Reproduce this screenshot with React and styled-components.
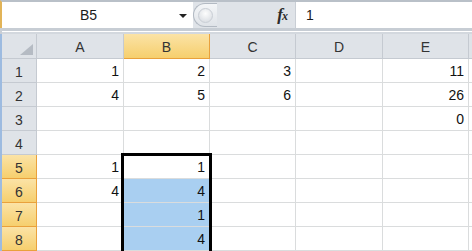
import React from "react";
import styled, { createGlobalStyle } from "styled-components";

const GlobalStyle = createGlobalStyle`
  html, body {
    margin: 0;
    padding: 0;
    background: #fff;
    overflow: hidden;
  }
  body {
    font-family: "Liberation Sans", Arial, sans-serif;
    font-size: 14px;
    color: #1a1a1a;
  }
`;

const Frame = styled.div`
  width: 472px;
  height: 251px;
  display: flex;
  flex-direction: column;
  overflow: hidden;
`;

const FormulaBar = styled.div`
  display: flex;
  height: 26px;
  border-top: 2px solid #b9c0c8;
  border-left: 2px solid #e2b458;
  background: #dfe3e8;
`;

const NameBox = styled.div`
  width: 191px;
  display: flex;
  align-items: center;
  background: #fff;
`;

const NameText = styled.div`
  flex: 1;
  text-align: center;
  padding-left: 2px;
`;

const Arrow = styled.div`
  width: 20px;
  display: flex;
  justify-content: center;

  &::before {
    content: "";
    border-left: 4px solid transparent;
    border-right: 4px solid transparent;
    border-top: 4px solid #222;
    margin-top: 2px;
  }
`;

const Handle = styled.div`
  width: 24px;
  margin: 1px 0;
  border: 1px solid #b3bac3;
  border-right: none;
  border-radius: 13px 0 0 13px;
  background: linear-gradient(to bottom, #f4f6f8, #dfe3e8);
  display: flex;
  align-items: center;
  padding-left: 4px;
  box-sizing: border-box;

  &::before {
    content: "";
    width: 13px;
    height: 13px;
    border-radius: 50%;
    background: radial-gradient(circle at 50% 35%, #fdfdfd, #d3d8de);
    border: 1px solid #c9ced5;
  }
`;

const FxArea = styled.div`
  width: 79px;
  display: flex;
  align-items: center;
  justify-content: flex-end;
  padding-right: 8px;
  box-sizing: border-box;
  border-right: 1px solid #c9ced5;
`;

const Fx = styled.span`
  font-family: "Liberation Serif", "Times New Roman", serif;
  font-style: italic;
  font-weight: bold;
  font-size: 17px;
  color: #2b2b2b;
  letter-spacing: -1px;

  & sub {
    font-size: 12px;
    vertical-align: 0;
  }
`;

const Input = styled.div`
  flex: 1;
  background: #fff;
  display: flex;
  align-items: center;
  padding-left: 10px;
`;

const Separator = styled.div`
  height: 6px;
  border-left: 2px solid #c9ced5;
  background: linear-gradient(
    to bottom,
    #c7cdd4 0 3px,
    #ffffff 3px 4px,
    #d3d8de 4px
  );
`;

const Sheet = styled.div`
  position: relative;
  flex: 1;
  border-left: 2px solid #9dbbe0;
  display: grid;
  grid-template-columns: 35px 87px 86px 86px 87px 86px 1fr;
  grid-template-rows: 25px;
  grid-auto-rows: 24px;
`;

const Corner = styled.div`
  position: relative;
  background: #dfe3e8;
  border-right: 1px solid #c5cad1;
  border-bottom: 1px solid #c5cad1;
  box-sizing: border-box;

  &::after {
    content: "";
    position: absolute;
    right: 3px;
    bottom: 3px;
    border-left: 13px solid transparent;
    border-bottom: 11px solid #b5bbc3;
  }
`;

const ColHead = styled.div`
  display: flex;
  align-items: center;
  justify-content: center;
  box-sizing: border-box;
  color: #333;
  background: ${p =>
    p.selected ? "linear-gradient(to bottom, #fbe3a6, #f6cf6e)" : "#dfe3e8"};
  border-right: 1px solid ${p => (p.selected ? "#e9a13c" : "#c5cad1")};
  border-bottom: 1px solid ${p => (p.selected ? "#e9a13c" : "#c5cad1")};
  padding-top: 1px;
`;

const RowHead = styled(ColHead)`
  align-items: flex-end;
  padding: 0 0 2px;
`;

const Cell = styled.div`
  display: flex;
  align-items: flex-end;
  justify-content: flex-end;
  padding: 0 4px 3px 0;
  box-sizing: border-box;
  background: ${p => (p.marked ? "#a9cff1" : "#fff")};
  border-right: 1px solid #dadcdd;
  border-bottom: 1px solid #dadcdd;
  color: #111;
`;

const Selection = styled.div`
  position: absolute;
  left: 119px;
  top: 119px;
  width: 91px;
  height: 120px;
  border: 3px solid #000;
  box-sizing: border-box;
  pointer-events: none;
`;

const columns = ["A", "B", "C", "D", "E", ""];

const data = [
  [1, 2, 3, "", 11, ""],
  [4, 5, 6, "", 26, ""],
  ["", "", "", "", 0, ""],
  ["", "", "", "", "", ""],
  [1, 1, "", "", "", ""],
  [4, 4, "", "", "", ""],
  ["", 1, "", "", "", ""],
  ["", 4, "", "", "", ""]
];

export default () => (
  <>
    <GlobalStyle />
    <Frame>
      <FormulaBar>
        <NameBox>
          <NameText>B5</NameText>
          <Arrow />
        </NameBox>
        <Handle />
        <FxArea>
          <Fx>
            f<sub>x</sub>
          </Fx>
        </FxArea>
        <Input>1</Input>
      </FormulaBar>
      <Separator />
      <Sheet>
        <Corner />
        {columns.map((c, i) => (
          <ColHead key={i} selected={c === "B"}>
            {c}
          </ColHead>
        ))}
        {data.map((row, r) => (
          <React.Fragment key={r}>
            <RowHead selected={r >= 4}>{r + 1}</RowHead>
            {row.map((v, c) => (
              <Cell key={c} marked={c === 1 && r >= 5}>
                {v}
              </Cell>
            ))}
          </React.Fragment>
        ))}
        <Selection />
      </Sheet>
    </Frame>
  </>
);
